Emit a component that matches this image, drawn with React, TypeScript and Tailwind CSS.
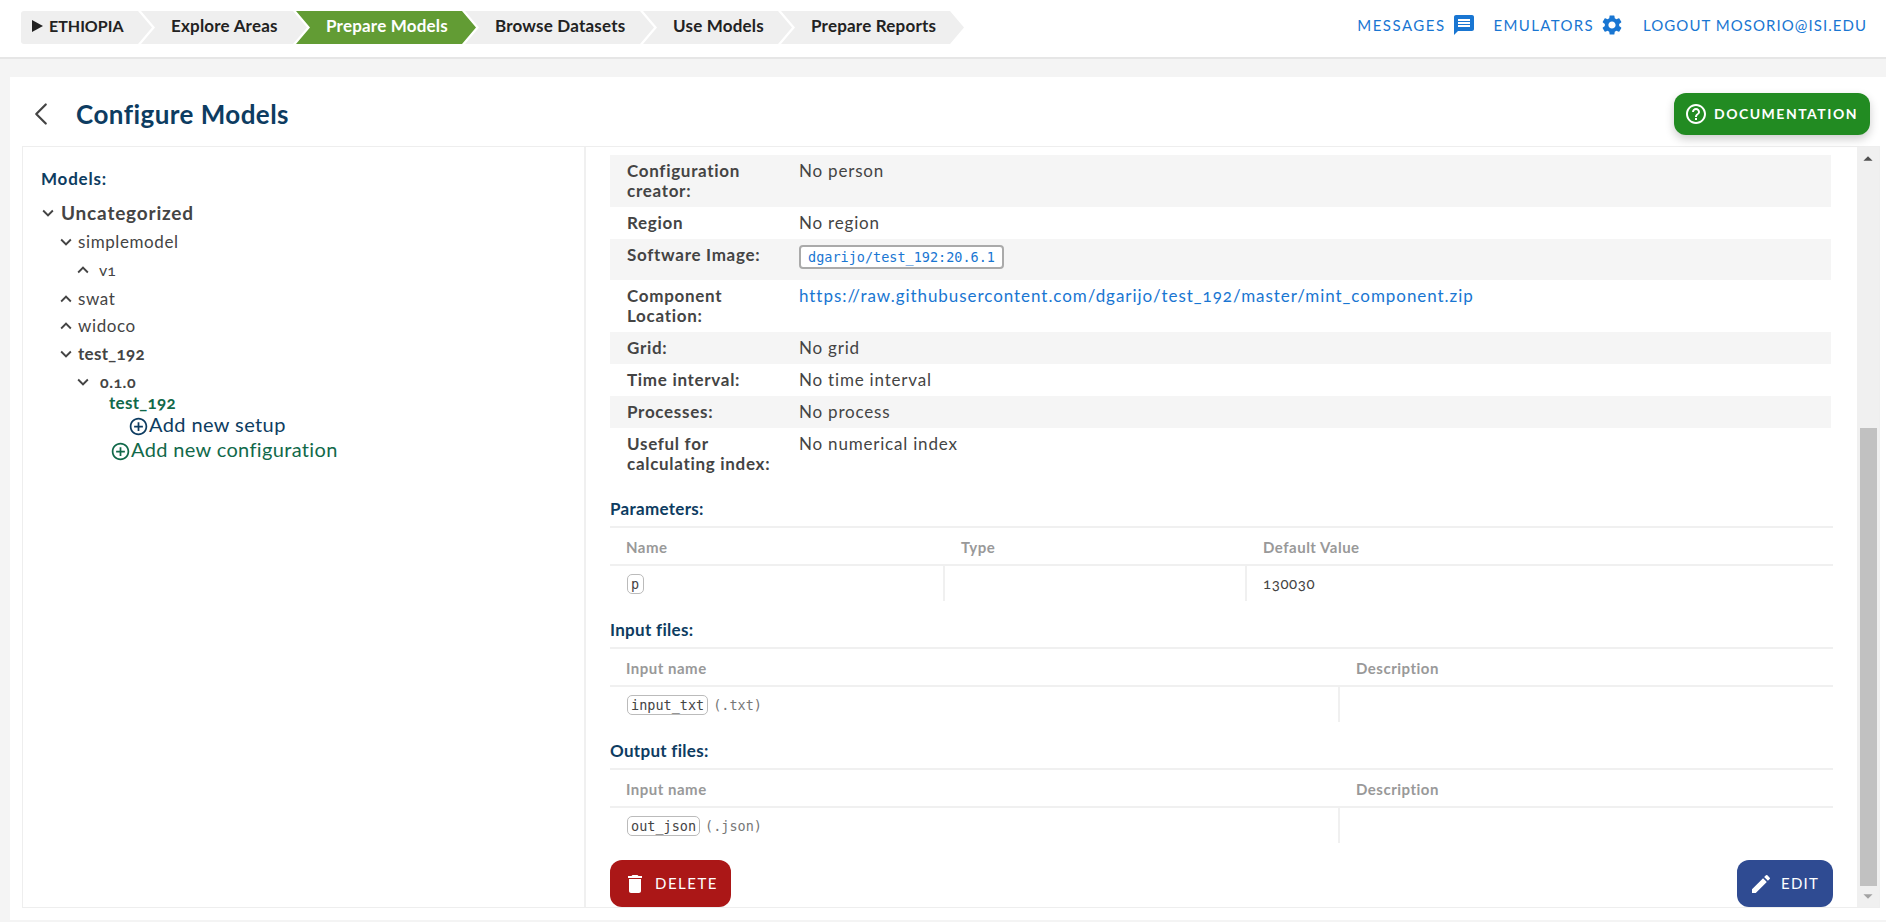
import React from "react";
import { ChevronLeft } from "lucide-react";
import {
  MdAddCircleOutline,
  MdArrowDropDown,
  MdArrowDropUp,
  MdDelete,
  MdEdit,
  MdHelpOutline,
  MdKeyboardArrowDown,
  MdKeyboardArrowUp,
  MdMessage,
  MdSettings,
} from "react-icons/md";

const chevronClip =
  "[clip-path:polygon(0_0,calc(100%-14px)_0,100%_50%,calc(100%-14px)_100%,0_100%,14px_50%)]";

const steps = [
  { label: "Explore Areas", width: "w-[166px]", active: false },
  { label: "Prepare Models", width: "w-[180px]", active: true },
  { label: "Browse Datasets", width: "w-[189px]", active: false },
  { label: "Use Models", width: "w-[149px]", active: false },
  { label: "Prepare Reports", width: "w-[183px]", active: false },
];

const details = [
  { label: "Configuration creator:", value: "No person", height: "h-[52px]" },
  { label: "Region", value: "No region", height: "h-[32px]" },
  { label: "Software Image:", value: "image", height: "h-[41px]" },
  {
    label: "Component Location:",
    value: "https://raw.githubusercontent.com/dgarijo/test_192/master/mint_component.zip",
    height: "h-[52px]",
  },
  { label: "Grid:", value: "No grid", height: "h-[32px]" },
  { label: "Time interval:", value: "No time interval", height: "h-[32px]" },
  { label: "Processes:", value: "No process", height: "h-[32px]" },
  { label: "Useful for calculating index:", value: "No numerical index", height: "h-[51px]" },
];

const mono = "font-['DejaVu_Sans_Mono','Liberation_Mono',monospace]";

const Tag = ({ children }: { children: React.ReactNode }) => (
  <span className={`${mono} inline-block rounded-[5px] border border-[#bbbbbb] px-[3px] text-[13.5px] leading-[18px] text-[#444444]`}>
    {children}
  </span>
);

const SectionTitle = ({ title, height }: { title: string; height: string }) => (
  <h3 className={`flex items-end border-b-2 border-[#f0f0f0] pb-[7px] text-[17px] leading-[20px] font-bold tracking-[0.3px] text-[#0d3c61] ${height}`}>
    {title}
  </h3>
);

const FilesTable = ({ title, tag, ext }: { title: string; tag: string; ext: string }) => (
  <section>
    <SectionTitle title={title} height="h-[48px]" />
    <div className="grid h-[38px] grid-cols-[730px_1fr] items-center border-b-2 border-[#f0f0f0] pt-[2px] text-[15px] font-bold tracking-[0.5px] text-[#999999]">
      <span className="pl-[16px]">Input name</span>
      <span className="pl-[16px]">Description</span>
    </div>
    <div className="grid h-[35px] grid-cols-[730px_1fr]">
      <div className="flex items-center gap-[5px] border-r-2 border-[#f0f0f0] pt-[1px] pl-[17px]">
        <Tag>{tag}</Tag>
        <span className={`${mono} text-[13.5px] text-[#777777]`}>{ext}</span>
      </div>
      <div />
    </div>
  </section>
);

const TreeRow = ({
  open,
  label,
  className,
  gap,
}: {
  open: boolean;
  label: string;
  className: string;
  gap: string;
}) => (
  <div className={`flex items-center ${className}`}>
    {open ? (
      <MdKeyboardArrowDown className={`shrink-0 text-[22px] ${gap}`} />
    ) : (
      <MdKeyboardArrowUp className={`shrink-0 text-[22px] ${gap}`} />
    )}
    <span>{label}</span>
  </div>
);

export default function App() {
  return (
    <div className="h-[922px] w-[1886px] overflow-hidden bg-[#f4f4f4] font-['Lato','Noto_Sans',sans-serif] text-[#444444] [font-variant-numeric:oldstyle-nums]">
      <header className="flex h-[59px] justify-between border-b-2 border-[#e6e6e6] bg-white pt-[11px] pr-[19px] pl-[21px]">
        <nav className="flex h-[33px]">
          <div className="flex w-[131px] items-center gap-[6px] rounded-l-[3px] bg-[#efefef] pb-[3px] pl-[11px] text-[16px] font-bold text-[#222222] [clip-path:polygon(0_0,calc(100%-14px)_0,100%_50%,calc(100%-14px)_100%,0_100%)]">
            <span className="h-0 w-0 border-y-[6px] border-l-[11px] border-y-transparent border-l-[#222222]" />
            ETHIOPIA
          </div>
          {steps.map((step) => (
            <div
              key={step.label}
              className={`-ml-[11px] flex items-center pb-[3px] pl-[30px] text-[17px] font-bold tracking-[0.2px] whitespace-nowrap ${step.width} ${chevronClip} ${
                step.active ? "bg-[#629c34] text-white" : "bg-[#efefef] text-[#222222]"
              }`}
            >
              {step.label}
            </div>
          ))}
        </nav>
        <div className="flex h-[28px] items-center text-[15px] text-[#1976d2]">
          <span className="tracking-[1.5px]">MESSAGES</span>
          <MdMessage className="ml-[6px] text-[24px]" />
          <span className="ml-[18px] tracking-[1.35px]">EMULATORS</span>
          <MdSettings className="ml-[6px] text-[24px]" />
          <span className="ml-[19px] tracking-[1.05px]">LOGOUT MOSORIO@ISI.EDU</span>
        </div>
      </header>

      <main className="mt-[18px] ml-[10px] h-[843px] bg-white">
        <div className="flex h-[69px] justify-between pt-[16px] pr-[16px] pl-[12px]">
          <div className="flex h-[42px] items-center">
            <ChevronLeft size={38} strokeWidth={1.4} className="text-[#444444]" />
            <h1 className="ml-[16px] text-[26px] font-bold tracking-[0.45px] text-[#0d3c61]">Configure Models</h1>
          </div>
          <button className="flex h-[42px] w-[196px] items-center rounded-[12px] bg-[#228b22] pb-[1px] pl-[10px] text-[14px] font-bold tracking-[1.5px] text-white shadow-[0_4px_10px_rgba(0,0,0,0.2)]">
            <MdHelpOutline className="mr-[6px] text-[24px]" />
            DOCUMENTATION
          </button>
        </div>

        <div className="ml-[12px] flex h-[762px] w-[1858px] border border-[#eeeeee]">
          <aside className="w-[563px] shrink-0 border-r-2 border-[#f0f0f0] pt-[20px] pl-[18px]">
            <h3 className="text-[17px] leading-[24px] font-bold tracking-[0.8px] text-[#0d3c61]">Models:</h3>
            <TreeRow open label="Uncategorized" className="mt-[10px] -ml-[4px] h-[24px] text-[19px] font-bold tracking-[0.8px]" gap="mr-[2px]" />
            <TreeRow open label="simplemodel" className="mt-[5px] ml-[14px] h-[24px] text-[17px] tracking-[0.6px]" gap="mr-[1px]" />
            <TreeRow open={false} label="v1" className="mt-[4px] ml-[31px] h-[24px] text-[16px]" gap="mr-[5px]" />
            <TreeRow open={false} label="swat" className="mt-[5px] ml-[14px] h-[24px] text-[17px] tracking-[0.6px]" gap="mr-[1px]" />
            <TreeRow open={false} label="widoco" className="mt-[3px] ml-[14px] h-[24px] text-[17px] tracking-[0.6px]" gap="mr-[1px]" />
            <TreeRow open label="test_192" className="mt-[4px] ml-[14px] h-[24px] text-[17px] font-bold tracking-[0.3px]" gap="mr-[1px]" />
            <TreeRow open label="0.1.0" className="mt-[4px] ml-[31px] h-[24px] text-[16px] font-bold tracking-[0.5px]" gap="mr-[6px]" />
            <div className="mt-[1px] ml-[68px] h-[16px] text-[17px] leading-[16px] font-bold tracking-[0.3px] text-[#11694a]">test_192</div>
            <div className="mt-[1px] ml-[87px] flex h-[24px] items-center text-[20px] tracking-[0.4px] text-[#0d3c61]">
              <MdAddCircleOutline className="mt-[4px] text-[21px]" />
              <span>Add new setup</span>
            </div>
            <div className="mt-[1px] ml-[69px] flex h-[24px] items-center text-[20px] tracking-[0.35px] text-[#11694a]">
              <MdAddCircleOutline className="mt-[4px] text-[21px]" />
              <span>Add new configuration</span>
            </div>
          </aside>

          <div className="flex min-w-0 flex-1 flex-col pt-[8px] pl-[24px]">
            <div className="w-[1223px]">
              <div className="w-[1221px]">
                {details.map((row, index) => (
                  <div
                    key={row.label}
                    className={`flex pt-[6px] text-[17px] leading-[20px] ${row.height} ${
                      index % 2 === 0 ? "bg-[#f5f5f5]" : "bg-white"
                    }`}
                  >
                    <div className="w-[189px] shrink-0 pr-[20px] pl-[17px] font-bold tracking-[0.7px]">{row.label}</div>
                    {row.value === "image" ? (
                      <code className={`${mono} h-[24px] rounded-[4px] border-[2px] border-[#aaaaaa] bg-white px-[7px] text-[13.5px] leading-[20px] text-[#1976d2]`}>
                        dgarijo/test_192:20.6.1
                      </code>
                    ) : row.value.startsWith("http") ? (
                      <a className="tracking-[0.95px] text-[#1976d2]">{row.value}</a>
                    ) : (
                      <div className="tracking-[0.8px]">{row.value}</div>
                    )}
                  </div>
                ))}
              </div>

              <section>
                <SectionTitle title="Parameters:" height="h-[49px]" />
                <div className="grid h-[38px] grid-cols-[335px_302px_1fr] items-center border-b-2 border-[#f0f0f0] pt-[2px] text-[15px] font-bold tracking-[0.5px] text-[#999999]">
                  <span className="pl-[16px]">Name</span>
                  <span className="pl-[16px]">Type</span>
                  <span className="pl-[16px]">Default Value</span>
                </div>
                <div className="grid h-[35px] grid-cols-[335px_302px_1fr] text-[15px] tracking-[0.6px]">
                  <div className="flex items-center border-r-2 border-[#f0f0f0] pt-[1px] pl-[17px]">
                    <Tag>p</Tag>
                  </div>
                  <div className="border-r-2 border-[#f0f0f0]" />
                  <div className="flex items-center pl-[16px]">130030</div>
                </div>
              </section>

              <FilesTable title="Input files:" tag="input_txt" ext="(.txt)" />
              <FilesTable title="Output files:" tag="out_json" ext="(.json)" />

              <div className="mt-[17px] flex justify-between">
                <button className="flex h-[47px] w-[121px] items-center rounded-[12px] bg-[#ab1717] pl-[13px] text-[15px] tracking-[1.5px] text-white">
                  <MdDelete className="mr-[8px] text-[24px]" />
                  DELETE
                </button>
                <button className="flex h-[47px] w-[96px] items-center rounded-[12px] bg-[#2f4b92] pl-[12px] text-[15px] tracking-[1.25px] text-white">
                  <MdEdit className="mr-[8px] text-[24px]" />
                  EDIT
                </button>
              </div>
            </div>
          </div>

          <div className="flex w-[22px] shrink-0 flex-col items-center bg-[#f0f0f0]">
            <MdArrowDropUp className="mt-[1px] h-[22px] text-[22px] text-[#505050]" />
            <div className="mt-[258px] h-[460px] w-[17px] bg-[#c1c1c1]" />
            <MdArrowDropDown className="mt-[-1px] text-[22px] text-[#a3a3a3]" />
          </div>
        </div>
      </main>
    </div>
  );
}
